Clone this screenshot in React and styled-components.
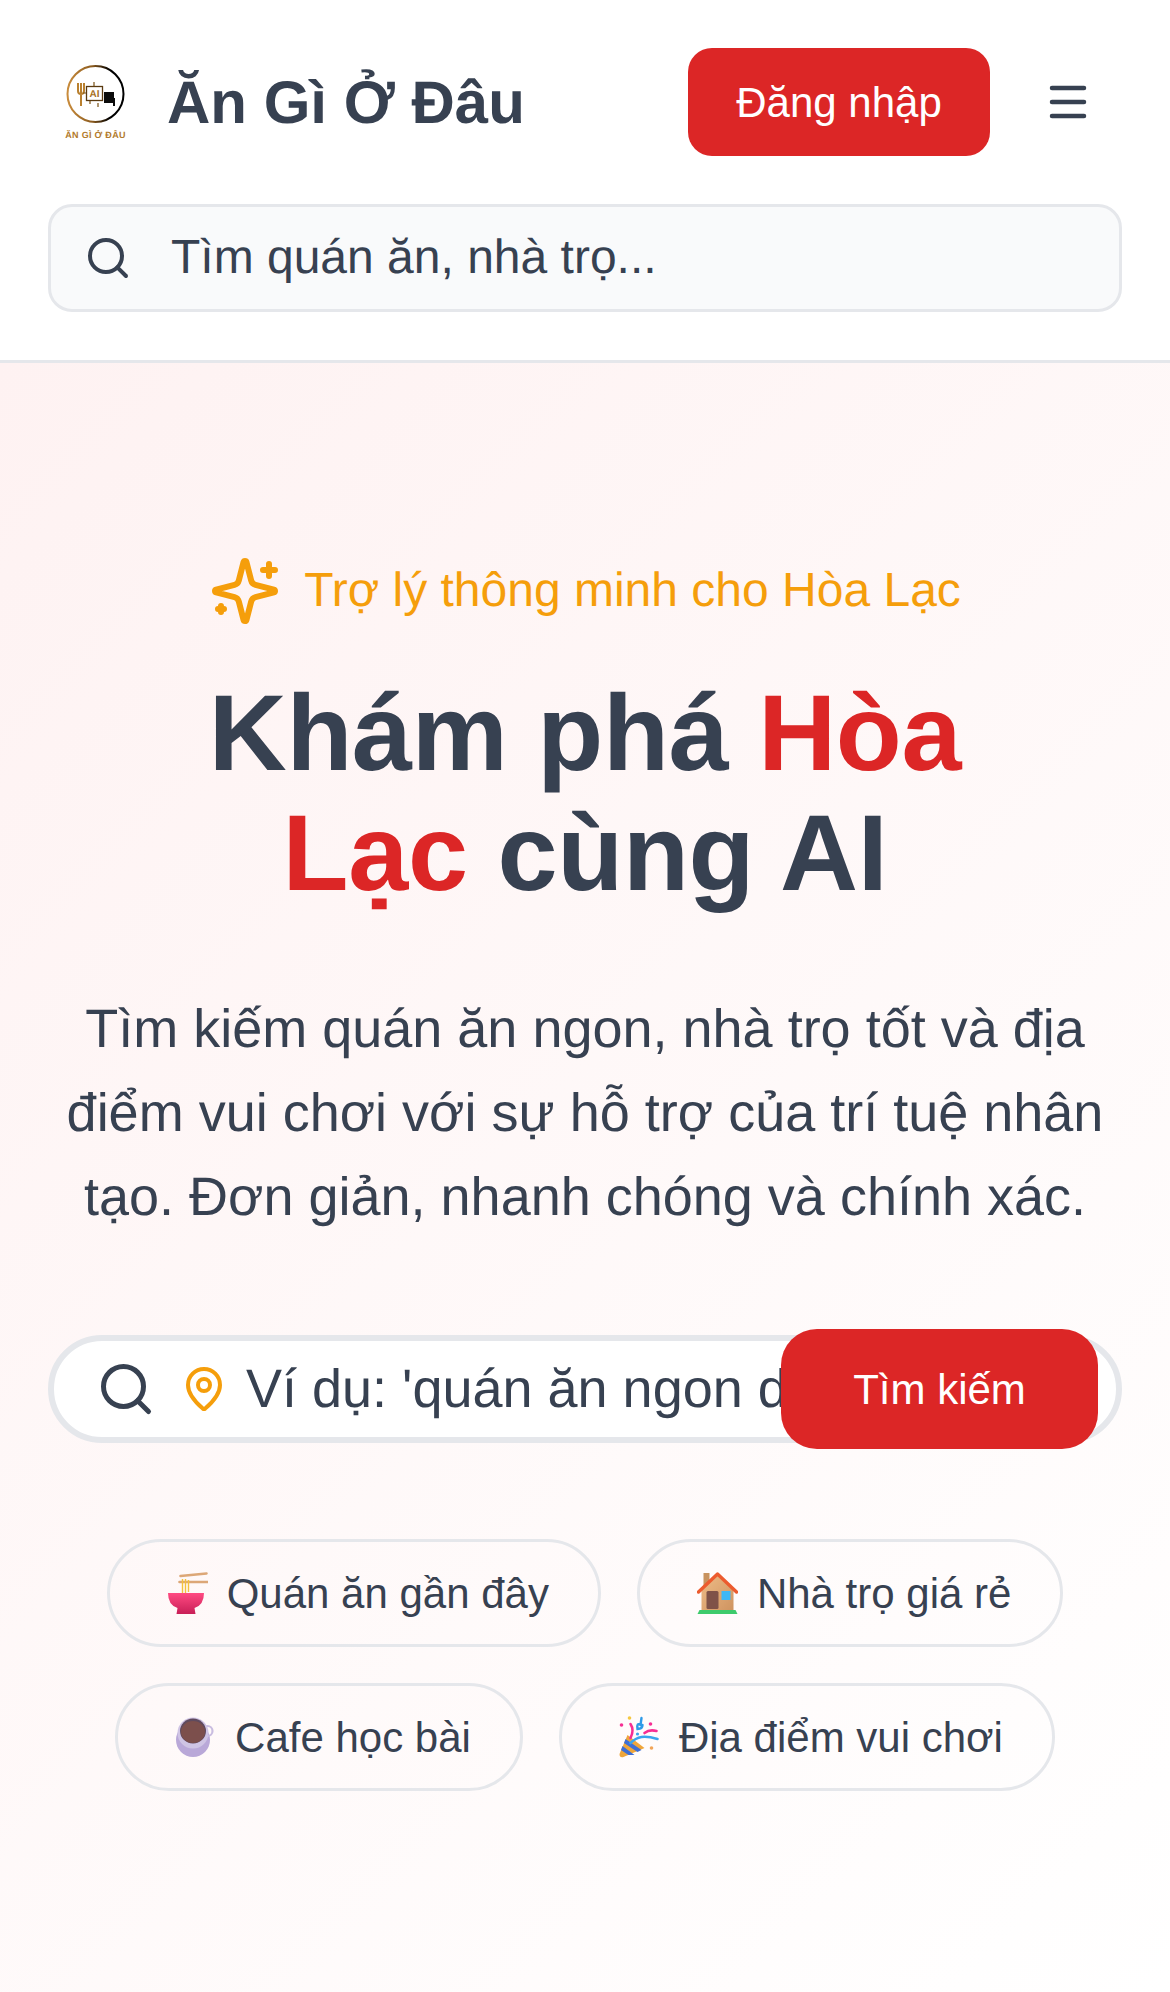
import React from 'react';
import styled, { createGlobalStyle } from 'styled-components';
import { Menu, Search, MapPin } from 'lucide-react';

const GlobalStyle = createGlobalStyle`
  * { box-sizing: border-box; }
  html, body { margin: 0; padding: 0; }
  body {
    background: #fff;
    font-family: "Liberation Sans", Arial, sans-serif;
    color: #374151;
    text-rendering: geometricPrecision;
  }
`;

const Page = styled.div`
  display: flex;
  flex-direction: column;
  min-height: 1992px;
`;

const Header = styled.header`
  display: flex;
  flex-direction: column;
  gap: 48px;
  padding: 48px;
  background: #fff;
  border-bottom: 3px solid #e5e7eb;
`;

const TopRow = styled.div`
  display: flex;
  align-items: center;
  justify-content: space-between;
`;

const Brand = styled.div`
  display: flex;
  align-items: center;
  gap: 23px;
`;

const LogoSvg = styled.svg`
  display: block;
  width: 96px;
  height: 96px;
  flex: none;
`;

const BrandName = styled.span`
  font-size: 60px;
  font-weight: 700;
  color: #374151;
`;

const Actions = styled.div`
  display: flex;
  align-items: center;
  gap: 54px;
  padding-right: 30px;
`;

const LoginButton = styled.button`
  width: 302px;
  height: 108px;
  padding: 2px 0 0;
  border: 0;
  border-radius: 24px;
  background: #dc2626;
  color: #fff;
  font: 400 42px "Liberation Sans", Arial, sans-serif;
`;

const MenuButton = styled.button`
  display: flex;
  padding: 0;
  border: 0;
  background: none;
  color: #374151;
`;

const HeaderSearch = styled.div`
  display: flex;
  align-items: center;
  gap: 39px;
  height: 108px;
  padding: 0 33px;
  border: 3px solid #e5e7eb;
  border-radius: 24px;
  background: #f9fafb;
`;

const HeaderPlaceholder = styled.span`
  padding-bottom: 2px;
  font-size: 48px;
  color: #374151;
`;

const Hero = styled.main`
  flex: 1;
  display: flex;
  flex-direction: column;
  align-items: center;
  padding: 192px 48px 0;
  background: linear-gradient(135deg, #fef2f2 0%, #ffffff 100%);
`;

const Tagline = styled.div`
  display: flex;
  align-items: center;
  gap: 23px;
  font-size: 48px;
  color: #f59e0b;
`;

const TaglineText = styled.span`
  padding-bottom: 2px;
`;

const Title = styled.h1`
  margin: 46px 0 0;
  max-width: 800px;
  font-size: 108px;
  line-height: 120px;
  font-weight: 700;
  letter-spacing: -0.3px;
  text-align: center;
  color: #374151;
`;

const Accent = styled.span`
  color: #dc2626;
`;

const Lead = styled.p`
  margin: 74px 0 0;
  font-size: 54px;
  line-height: 84px;
  text-align: center;
  color: #374151;
`;

const SearchBar = styled.div`
  position: relative;
  align-self: stretch;
  display: flex;
  align-items: center;
  height: 108px;
  margin-top: 96px;
  padding-left: 42px;
  border: 6px solid #e5e7eb;
  border-radius: 54px;
  background: #fff;
`;

const PinWrap = styled.span`
  display: flex;
  margin-left: 24px;
  color: #f59e0b;
`;

const BarPlaceholder = styled.span`
  flex: 1;
  min-width: 0;
  margin-left: 18px;
  overflow: hidden;
  white-space: nowrap;
  font-size: 54px;
  color: #374151;
`;

const SearchButton = styled.button`
  position: absolute;
  top: -12px;
  right: 18px;
  width: 317px;
  height: 120px;
  padding: 2px 0 0;
  border: 0;
  border-radius: 36px;
  background: #dc2626;
  color: #fff;
  font: 400 42px "Liberation Sans", Arial, sans-serif;
`;

const Chips = styled.div`
  display: flex;
  flex-wrap: wrap;
  justify-content: center;
  gap: 36px;
  margin-top: 96px;
`;

const Chip = styled.button`
  display: inline-flex;
  align-items: center;
  gap: 19px;
  height: 108px;
  padding: 0 49px 0 57px;
  border: 3px solid #e5e7eb;
  border-radius: 54px;
  background: transparent;
  color: #374151;
  font: 400 42px "Liberation Sans", Arial, sans-serif;
`;

const ChipLabel = styled.span`
  padding-top: 2px;
`;

const EmojiSvg = styled.svg`
  display: block;
  width: 41px;
  height: 42px;
  flex: none;
`;

const Logo = () => (
  <LogoSvg viewBox="0 0 96 96">
    <defs>
      <linearGradient id="ring" x1="0" x2="1" y1="0" y2="0">
        <stop offset="0" stopColor="#c98c3c" />
        <stop offset="0.45" stopColor="#8a5a1e" />
        <stop offset="0.75" stopColor="#000" />
      </linearGradient>
    </defs>
    <circle cx="47.5" cy="40" r="28" fill="none" stroke="url(#ring)" strokeWidth="2" />
    <path d="M30 29v8a3 3 0 0 0 6 0v-8M33 29v23" fill="none" stroke="#b9802f" strokeWidth="2" />
    <rect x="38.5" y="32.5" width="16" height="14" fill="#fff" stroke="#5a3a10" strokeWidth="1.3" />
    <text x="46.5" y="43" textAnchor="middle" fontFamily="Liberation Sans" fontSize="10" fontWeight="700" fill="#a8701f">AI</text>
    <path d="M46 28v4M42 50v-3M50 49v4M35 39h3" stroke="#7a5216" strokeWidth="1.2" />
    <path d="M56 38h10v6h1v8h-2v-3H56z" fill="#0b0b0b" />
    <text x="47.5" y="84" textAnchor="middle" fontFamily="Liberation Sans" fontSize="9" fontWeight="700" letterSpacing="0.3" fill="#b27a2c">ĂN GÌ Ở ĐÂU</text>
  </LogoSvg>
);

const SparklesIcon = () => (
  <svg width="72" height="72" viewBox="0 0 24 24" fill="none" stroke="currentColor" strokeWidth="2" strokeLinecap="round" strokeLinejoin="round">
    <path d="M9.937 15.5A2 2 0 0 0 8.5 14.063l-6.135-1.582a.5.5 0 0 1 0-.962L8.5 9.936A2 2 0 0 0 9.937 8.5l1.582-6.135a.5.5 0 0 1 .963 0L14.063 8.5A2 2 0 0 0 15.5 9.937l6.135 1.581a.5.5 0 0 1 0 .964L15.5 14.063a2 2 0 0 0-1.437 1.437l-1.582 6.135a.5.5 0 0 1-.963 0z" />
    <path d="M20 3v4M22 5h-4M4 17v2M5 18H3" />
  </svg>
);

const BowlEmoji = () => (
  <EmojiSvg viewBox="0 0 40 42">
    <defs>
      <linearGradient id="bowl" x1="0" x2="0" y1="0" y2="1">
        <stop offset="0" stopColor="#ff4a82" />
        <stop offset="1" stopColor="#c81f57" />
      </linearGradient>
    </defs>
    <path d="M13 4L39 1.5M12 10h28" stroke="#dca777" strokeWidth="2.6" strokeLinecap="round" />
    <path d="M15 7v14M18 7v14M21 8v12" stroke="#f4c23c" strokeWidth="1.4" />
    <path d="M0.5 21H36.5Q36.5 33 27 36L28 42H9L10 36Q0.5 33 0.5 21Z" fill="url(#bowl)" />
  </EmojiSvg>
);

const HouseEmoji = () => (
  <EmojiSvg viewBox="0 0 40 42">
    <defs>
      <linearGradient id="wall" x1="0" x2="1" y1="0" y2="1">
        <stop offset="0" stopColor="#eebc88" />
        <stop offset="1" stopColor="#cf9460" />
      </linearGradient>
    </defs>
    <rect x="6" y="1" width="6" height="14" fill="#c8935f" />
    <path d="M4 18L20 3L36 18V38H4Z" fill="url(#wall)" />
    <path d="M1 20L20 2L39 20" fill="none" stroke="#ec5b2e" strokeWidth="3.4" strokeLinejoin="round" strokeLinecap="round" />
    <rect x="9" y="19" width="12" height="18" rx="1.5" fill="#7f5248" />
    <rect x="24" y="19" width="9" height="9" fill="#3fb7f6" />
    <path d="M2 38H38L40 42H0Z" fill="#3ecb6c" />
  </EmojiSvg>
);

const CupEmoji = () => (
  <EmojiSvg viewBox="0 0 40 42">
    <circle cx="17.5" cy="24" r="17" fill="#b9a8d8" />
    <circle cx="32" cy="15" r="5" fill="none" stroke="#c9bde0" strokeWidth="2.2" />
    <circle cx="17.5" cy="17" r="15.5" fill="#cfc4e4" />
    <ellipse cx="17.5" cy="15" rx="13" ry="12.5" fill="#5f4a5e" />
    <ellipse cx="17.5" cy="16" rx="12" ry="11" fill="#7c4f4c" />
  </EmojiSvg>
);

const PartyEmoji = () => (
  <EmojiSvg viewBox="0 0 40 42">
    <path d="M0 38L8 19L25 32L4 41Q0 42 0 38Z" fill="#efa63b" />
    <path d="M3 30L15 39L9 39L1.5 34ZM6 23L22 34L18 36L4.5 27Z" fill="#3d6fd6" />
    <path d="M11 27Q16 22 22 21T38 23" fill="none" stroke="#3aa5ee" strokeWidth="2.6" strokeLinecap="round" />
    <path d="M11 8Q15 14 11 22M25 17Q30 13 37 15" fill="none" stroke="#f72f94" strokeWidth="2.6" strokeLinecap="round" />
    <path d="M22 2L21 9Q17 6 18 13Q23 13 23 9" fill="none" stroke="#2e9be8" strokeWidth="2.4" strokeLinecap="round" />
    <circle cx="10" cy="2" r="1.8" fill="#f5c842" />
    <circle cx="2" cy="9" r="1.8" fill="#f72f94" />
    <circle cx="31" cy="8" r="1.8" fill="#f72f94" />
    <circle cx="32" cy="32" r="1.8" fill="#f2a65a" />
    <circle cx="18" cy="18" r="1.6" fill="#3aa5ee" />
  </EmojiSvg>
);

const chips = [
  { label: 'Quán ăn gần đây', Emoji: BowlEmoji },
  { label: 'Nhà trọ giá rẻ', Emoji: HouseEmoji },
  { label: 'Cafe học bài', Emoji: CupEmoji },
  { label: 'Địa điểm vui chơi', Emoji: PartyEmoji },
];

export default function App() {
  return (
    <Page>
      <GlobalStyle />
      <Header>
        <TopRow>
          <Brand>
            <Logo />
            <BrandName>Ăn Gì Ở Đâu</BrandName>
          </Brand>
          <Actions>
            <LoginButton>Đăng nhập</LoginButton>
            <MenuButton><Menu size={48} strokeWidth={2.25} /></MenuButton>
          </Actions>
        </TopRow>
        <HeaderSearch>
          <Search size={48} color="#374151" />
          <HeaderPlaceholder>Tìm quán ăn, nhà trọ...</HeaderPlaceholder>
        </HeaderSearch>
      </Header>
      <Hero>
        <Tagline>
          <SparklesIcon />
          <TaglineText>Trợ lý thông minh cho Hòa Lạc</TaglineText>
        </Tagline>
        <Title>Khám phá <Accent>Hòa Lạc</Accent> cùng AI</Title>
        <Lead>Tìm kiếm quán ăn ngon, nhà trọ tốt và địa điểm vui chơi với sự hỗ trợ của trí tuệ nhân tạo. Đơn giản, nhanh chóng và chính xác.</Lead>
        <SearchBar>
          <Search size={60} color="#374151" />
          <PinWrap><MapPin size={48} /></PinWrap>
          <BarPlaceholder>Ví dụ: 'quán ăn ngon dưới 50k'</BarPlaceholder>
          <SearchButton>Tìm kiếm</SearchButton>
        </SearchBar>
        <Chips>
          {chips.map(({ label, Emoji }) => (
            <Chip key={label}><Emoji /><ChipLabel>{label}</ChipLabel></Chip>
          ))}
        </Chips>
      </Hero>
    </Page>
  );
}
